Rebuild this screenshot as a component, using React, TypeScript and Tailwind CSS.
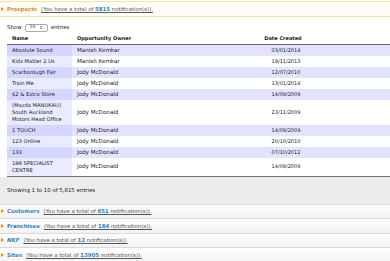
import React from "react"

type Row = { name: React.ReactNode; owner: string; date: string }

const rows: Row[] = [
  { name: "Absolute Sound", owner: "Manish Kemkar", date: "03/01/2014" },
  { name: "Kidz Matter 2 Us", owner: "Manish Kemkar", date: "19/11/2013" },
  { name: "Scarborough Fair", owner: "Jody McDonald", date: "12/07/2010" },
  { name: "Train Me", owner: "Jody McDonald", date: "13/01/2014" },
  { name: "$2 & Extra Store", owner: "Jody McDonald", date: "14/09/2009" },
  {
    name: (
      <>
        (Mazda MANUKAU)
        <br />
        South Auckland
        <br />
        Motors Head Office
      </>
    ),
    owner: "Jody McDonald",
    date: "23/11/2009",
  },
  { name: "1 TOUCH", owner: "Jody McDonald", date: "14/09/2009" },
  { name: "123 Online", owner: "Jody McDonald", date: "20/10/2010" },
  { name: "133", owner: "Jody McDonald", date: "07/10/2012" },
  {
    name: (
      <>
        188 SPECIALIST
        <br />
        CENTRE
      </>
    ),
    owner: "Jody McDonald",
    date: "14/09/2009",
  },
]

function Bullet() {
  return (
    <svg width="3" height="4" viewBox="0 0 3 4" className="shrink-0">
      <path d="M0 0 L3 2 L0 4 Z" fill="#f08a00" />
    </svg>
  )
}

function Notice({
  title,
  count,
  orange,
  italic,
}: {
  title: string
  count: string
  orange?: boolean
  italic?: boolean
}) {
  return (
    <div className="flex items-center gap-[3px] pl-[1px]">
      <Bullet />
      <span
        className={
          "font-bold " +
          (orange ? "text-[#e8830c]" : "text-[#2a86c6]") +
          (italic ? " italic" : "")
        }
      >
        {title}
      </span>
      <span className="text-[#555] underline ml-[1px]">
        (You have a total of{" "}
        <span className="font-bold text-[#2a86c6]">{count}</span>{" "}
        notification(s)).
      </span>
    </div>
  )
}

export default function App() {
  return (
    <div className="w-[390px] h-[261px] overflow-hidden bg-white text-[5.4px] text-[#1a1a1a] font-['DejaVu_Sans',sans-serif]">
      {/* Prospects header */}
      <div className="h-[16px] mt-[1px] border-y border-[#f3e4a6] bg-[#fffef8] flex items-center">
        <Notice title="Prospects" count="5815" orange />
      </div>

      {/* Table panel */}
      <div className="pl-[7px] pt-[6px]">
        <div className="flex items-center gap-[3px] h-[9px]">
          <span>Show</span>
          <span className="flex items-center gap-[4px] h-[8px] px-[4px] border border-[#aaa] rounded-[2px] bg-white text-[4.5px]">
            10 <span className="text-[4px]">↕</span>
          </span>
          <span>entries</span>
        </div>

        <table className="w-[400px] border-collapse mt-[1px] table-fixed">
          <colgroup>
            <col className="w-[65px]" />
            <col className="w-[120px]" />
            <col />
          </colgroup>
          <thead className="text-[5px]">
            <tr className="border-b border-[#666]">
              <th className="h-[11px] px-[5px] text-left font-bold">Name</th>
              <th className="px-[5px] text-left font-bold">Opportunity Owner</th>
              <th className="pl-[5px] pr-[38px] text-center font-bold">Date Created</th>
            </tr>
          </thead>
          <tbody className="border-b border-[#777]">
            {rows.map((r, i) => {
              const odd = i % 2 === 0
              return (
                <tr key={i} className={odd ? "bg-[#e2e4ff]" : "bg-white"}>
                  <td
                    className={
                      "pl-[5px] pr-0 py-[2px] leading-[7px] text-[5.2px] whitespace-nowrap " +
                      (odd ? "bg-[#d3d6ff]" : "bg-[#eaebff]")
                    }
                  >
                    {r.name}
                  </td>
                  <td className="px-[5px] py-[2px] leading-[7px] text-[5.6px]">{r.owner}</td>
                  <td className="pl-[5px] pr-[32px] py-[2px] leading-[7px] text-center text-[5px]">
                    {r.date}
                  </td>
                </tr>
              )
            })}
          </tbody>
        </table>
      </div>

      {/* Footer info */}
      <div className="h-[27px] bg-[#ececec] flex items-center pl-[7px]">
        Showing 1 to 10 of 5,815 entries
      </div>

      {/* Collapsed notices */}
      <div className="flex flex-col">
        {[
          { t: "Customers", c: "651" },
          { t: "Franchisee", c: "184" },
          { t: "NKF", c: "12", i: true },
          { t: "Sites", c: "13905" },
        ].map((n) => (
          <div
            key={n.t}
            className="h-[14.6px] border-t border-[#dadada] bg-gradient-to-b from-[#fefefe] to-[#f2f2f2] flex items-center"
          >
            <Notice title={n.t} count={n.c} italic={n.i} />
          </div>
        ))}
      </div>
    </div>
  )
}
